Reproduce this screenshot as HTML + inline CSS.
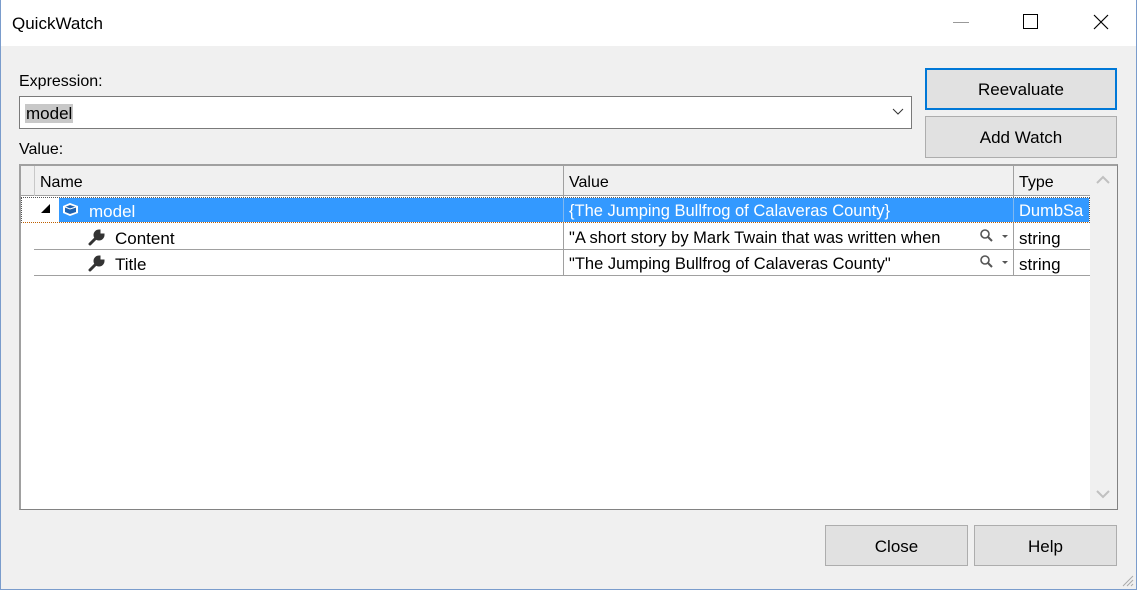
<!DOCTYPE html>
<html><head><style>
*{margin:0;padding:0;box-sizing:border-box}
body{width:1137px;height:590px;background:#f0f0f0;font-family:"Liberation Sans",sans-serif;font-size:16px;color:#000;position:relative;overflow:hidden}
.a{position:absolute}
.btn{position:absolute;background:#e1e1e1;border:1px solid #adadad;text-align:center;font-size:17px}
</style></head><body>
<div class="a" style="left:0;top:0;width:1137px;height:46px;background:#fff"></div>
<div class="a" style="left:12px;top:14px;font-size:17px">QuickWatch</div>
<div class="a" style="left:953px;top:22px;width:16px;height:1px;background:#999"></div>
<div class="a" style="left:1023px;top:14px;width:15px;height:15px;border:1px solid #000"></div>
<svg class="a" style="left:1093px;top:14px" width="16" height="16"><path d="M1 1L15 15M15 1L1 15" stroke="#000" stroke-width="1.2"/></svg>
<div class="a" style="left:0;top:0;width:1137px;height:590px;border:1px solid #7a9ccc;border-top:none"></div>
<div class="a" style="left:19px;top:73px;font-size:16px">Expression:</div>
<div class="a" style="left:19px;top:96px;width:893px;height:33px;background:#fff;border:1px solid #7a7a7a"></div>
<div class="a" style="left:25px;top:104px;background:#c8c8c8;padding:0 1px;line-height:19px;font-size:17px">model</div>
<svg class="a" style="left:892px;top:108px" width="12" height="8"><path d="M1 1L6 6L11 1" stroke="#333" fill="none"/></svg>
<div class="btn" style="left:925px;top:68px;width:192px;height:42px;border:2px solid #0078d7;line-height:40px">Reevaluate</div>
<div class="btn" style="left:925px;top:116px;width:192px;height:42px;line-height:42px">Add Watch</div>
<div class="a" style="left:19px;top:141px">Value:</div>
<div class="a" style="left:19px;top:164px;width:1099px;height:346px;background:#fff;border:1px solid #828282;border-top:2px solid #a0a0a0;border-left:2px solid #a0a0a0"></div>
<div class="a" style="left:21px;top:166px;width:1069px;height:30px;background:#f0f0f0;border-bottom:1px solid #a0a0a0"></div>
<div class="a" style="left:34px;top:166px;width:1px;height:30px;background:#c8c8c8"></div>
<div class="a" style="left:563px;top:166px;width:1px;height:109px;background:#a0a0a0"></div>
<div class="a" style="left:1013px;top:166px;width:1px;height:109px;background:#a0a0a0"></div>
<div class="a" style="left:40px;top:174px">Name</div>
<div class="a" style="left:569px;top:174px">Value</div>
<div class="a" style="left:1019px;top:174px">Type</div>
<div class="a" style="left:1090px;top:166px;width:27px;height:343px;background:#f0f0f0"></div>
<svg class="a" style="left:1096px;top:175px" width="14" height="9"><path d="M1 8L7 2L13 8" stroke="#c0c0c0" stroke-width="2" fill="none"/></svg>
<svg class="a" style="left:1096px;top:490px" width="14" height="9"><path d="M1 1L7 7L13 1" stroke="#c0c0c0" stroke-width="2" fill="none"/></svg>
<div class="a" style="left:21px;top:197px;width:1069px;height:26px;border:1px dotted #555;border-bottom-color:#c06000"></div>
<div class="a" style="left:59px;top:198px;width:1030px;height:24px;background:#3399ff"></div>
<div class="a" style="left:563px;top:198px;width:1px;height:24px;background:#80b8f0"></div>
<div class="a" style="left:1013px;top:198px;width:1px;height:24px;background:#80b8f0"></div>
<svg class="a" style="left:40px;top:203px" width="12" height="12"><path d="M10 1L10 10L1 10Z" fill="#000"/></svg>
<svg class="a" style="left:61px;top:201px" width="19" height="17"><path d="M2 5L9 2L17 5L17 12L9 15L2 12Z" fill="#fff"/><path d="M4 6L9 4L15 6L15 11L9 13L4 11Z" fill="#1e62b0"/><path d="M4 6L9 8L15 6" stroke="#fff" fill="none"/></svg>
<div class="a" style="left:89px;top:202px;color:#fff;font-size:17px">model</div>
<div class="a" style="left:569px;top:202px;color:#fff;font-size:16.5px">{The Jumping Bullfrog of Calaveras County}</div>
<div class="a" style="left:1019px;top:202px;color:#fff;width:70px;overflow:hidden;white-space:nowrap;font-size:16.5px">DumbSa</div>
<div class="a" style="left:34px;top:249px;width:1056px;height:1px;background:#a0a0a0"></div>
<div class="a" style="left:34px;top:275px;width:1056px;height:1px;background:#a0a0a0"></div>
<svg class="a" style="left:88px;top:228px" width="18" height="18"><path d="M2 16L10 8M11 3a4 4 0 1 0 4 4l-3 0-1-1z" stroke="#333" stroke-width="3" fill="#333" stroke-linecap="round"/></svg>
<svg class="a" style="left:88px;top:254px" width="18" height="18"><path d="M2 16L10 8M11 3a4 4 0 1 0 4 4l-3 0-1-1z" stroke="#333" stroke-width="3" fill="#333" stroke-linecap="round"/></svg>
<div class="a" style="left:115px;top:229px;font-size:17px">Content</div>
<div class="a" style="left:115px;top:255px;font-size:17px">Title</div>
<div class="a" style="left:569px;top:229px;width:406px;overflow:hidden;white-space:nowrap;font-size:16.5px">"A short story by Mark Twain that was written when</div>
<div class="a" style="left:569px;top:255px;font-size:16.5px">"The Jumping Bullfrog of Calaveras County"</div>
<svg class="a" style="left:979px;top:229px" width="34" height="14"><circle cx="6" cy="5" r="4" stroke="#555" stroke-width="1.6" fill="none"/><path d="M9 8L13 12" stroke="#555" stroke-width="2"/><path d="M23 6L29 6L26 9Z" fill="#555"/></svg>
<svg class="a" style="left:979px;top:255px" width="34" height="14"><circle cx="6" cy="5" r="4" stroke="#555" stroke-width="1.6" fill="none"/><path d="M9 8L13 12" stroke="#555" stroke-width="2"/><path d="M23 6L29 6L26 9Z" fill="#555"/></svg>
<div class="a" style="left:1019px;top:229px;font-size:17px">string</div>
<div class="a" style="left:1019px;top:255px;font-size:17px">string</div>
<div class="btn" style="left:825px;top:525px;width:143px;height:41px;line-height:41px">Close</div>
<div class="btn" style="left:974px;top:525px;width:143px;height:41px;line-height:41px">Help</div>
<svg class="a" style="left:1122px;top:575px" width="12" height="12"><path d="M11 1L1 11M11 5L5 11M11 9L9 11" stroke="#aaa"/></svg>
</body></html>
